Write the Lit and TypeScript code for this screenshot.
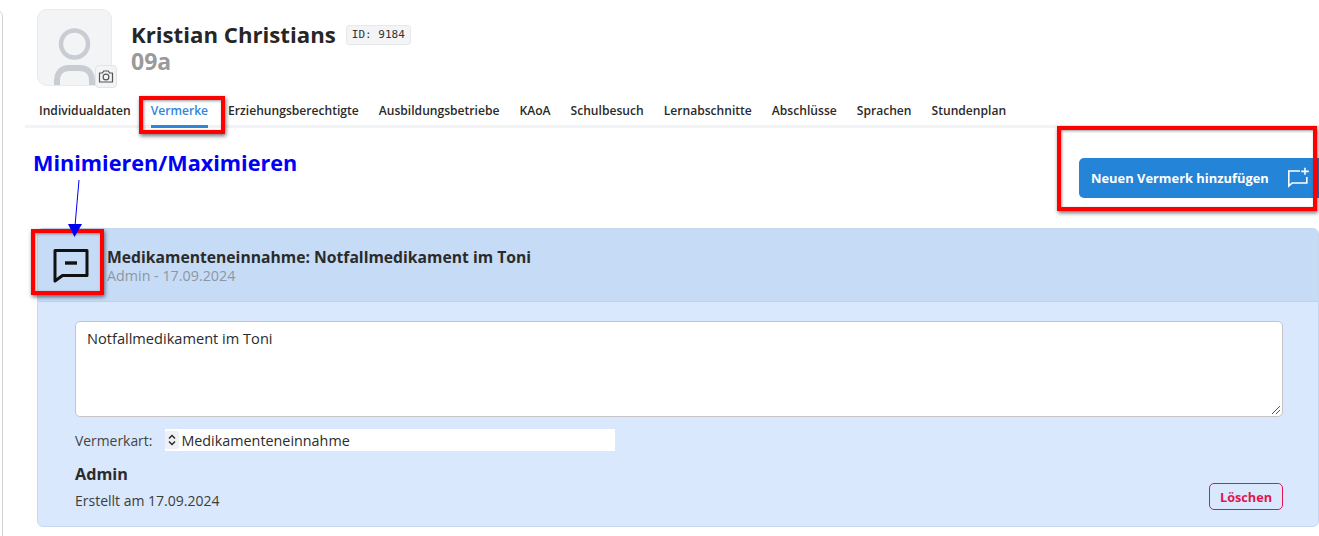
import { LitElement, html, css } from "lit";
import { customElement } from "lit/decorators.js";

const TABS = [
  "Individualdaten",
  "Vermerke",
  "Erziehungsberechtigte",
  "Ausbildungsbetriebe",
  "KAoA",
  "Schulbesuch",
  "Lernabschnitte",
  "Abschlüsse",
  "Sprachen",
  "Stundenplan",
];

@customElement("app-root")
export class AppRoot extends LitElement {
  static styles = css`
    :host {
      display: block;
      position: relative;
      width: 1319px;
      height: 536px;
      overflow: hidden;
      background: #fff;
      font-family: "Open Sans", "Noto Sans", sans-serif;
      color: #262626;
    }

    .rail {
      position: absolute;
      left: -10px;
      top: 10px;
      width: 11px;
      height: 540px;
      border: 1px solid #d4d4d4;
      border-radius: 6px;
    }

    .page {
      padding: 9px 0 0 25px;
    }

    .head {
      display: flex;
      gap: 19px;
      padding-left: 12px;
      height: 77px;
    }

    .avatar {
      position: relative;
      width: 75px;
      height: 77px;
      box-sizing: border-box;
      border: 1px solid #e8eaed;
      border-radius: 10px;
      background: #f3f4f6;
    }

    .avatar .person {
      display: block;
      width: 73px;
      height: 75px;
      border-radius: 10px;
    }

    .cam {
      position: absolute;
      right: -6px;
      bottom: -3px;
      width: 22px;
      height: 23px;
      box-sizing: border-box;
      display: flex;
      align-items: center;
      justify-content: center;
      background: #f3f4f6;
      border: 1px solid #e2e4e8;
      border-radius: 4px;
    }

    .who {
      padding-top: 12px;
    }

    .name-row {
      display: flex;
      align-items: center;
      gap: 10px;
      height: 28px;
    }

    .name {
      font-size: 22.2px;
      font-weight: 700;
      line-height: 28px;
      white-space: nowrap;
    }

    .id {
      font-family: "DejaVu Sans Mono", monospace;
      font-size: 11px;
      line-height: 18px;
      padding: 0 5px;
      color: #333;
      background: #f3f4f6;
      border: 1px solid #e6e8eb;
      border-radius: 3px;
    }

    .klasse {
      font-size: 23px;
      font-weight: 700;
      line-height: 25px;
      color: #9a9a9a;
    }

    .tabs {
      display: flex;
      gap: 20px;
      height: 42px;
      box-sizing: border-box;
      padding-left: 14px;
      border-bottom: 3px solid #f2f3f4;
    }

    .tab {
      font-size: 12.1px;
      font-weight: 600;
      line-height: 16px;
      padding-top: 17px;
      white-space: nowrap;
      color: #2a2a2a;
      box-sizing: border-box;
      height: 42px;
    }

    .tab.on {
      color: #2f86d8;
      border-bottom: 3px solid #2f86d8;
    }

    .actions {
      display: flex;
      justify-content: flex-end;
      height: 100px;
      box-sizing: border-box;
      padding-top: 30px;
    }

    .add {
      display: flex;
      align-items: center;
      justify-content: space-between;
      width: 240px;
      height: 40px;
      box-sizing: border-box;
      padding: 0 9px 0 12px;
      background: #2484d8;
      color: #fff;
      font-size: 12.9px;
      font-weight: 700;
      border-radius: 5px 0 0 5px;
    }

    .card {
      margin-left: 12px;
      height: 299px;
      box-sizing: border-box;
      background: #d9e8fd;
      border: 1px solid #c7d8ee;
      border-radius: 6px;
      overflow: hidden;
    }

    .card-head {
      display: flex;
      align-items: center;
      gap: 17px;
      height: 73px;
      box-sizing: border-box;
      padding-left: 14px;
      background: #c6dcf6;
      border-bottom: 1px solid #bdd3ee;
    }

    .card-head svg {
      flex: none;
    }

    .title {
      font-size: 15.7px;
      font-weight: 700;
      line-height: 20px;
      color: #2b2b2b;
      margin-top: 2px;
    }

    .sub {
      font-size: 14.3px;
      line-height: 18px;
      color: #8d97a3;
    }

    .card-body {
      padding: 19px 35px 0 37px;
    }

    .note {
      height: 96px;
      box-sizing: border-box;
      position: relative;
      padding: 6px 11px;
      background: #fff;
      border: 1px solid #c4c4c4;
      border-radius: 5px;
      font-size: 14.6px;
      line-height: 20px;
      color: #2b2b2b;
    }

    .grip {
      position: absolute;
      right: 1px;
      bottom: 1px;
    }

    .kind {
      display: flex;
      align-items: center;
      gap: 13px;
      height: 22px;
      margin-top: 12px;
      font-size: 13.9px;
      color: #444;
    }

    .select {
      display: flex;
      align-items: center;
      width: 450px;
      height: 22px;
      background: #fff;
      color: #2b2b2b;
      font-size: 14.35px;
    }

    .spin {
      display: flex;
      align-items: center;
      justify-content: center;
      width: 14px;
      height: 18px;
      margin-right: 2px;
      background: #eef0f3;
      border-radius: 3px;
    }

    .foot {
      display: flex;
      justify-content: space-between;
      align-items: flex-end;
    }

    .author {
      font-size: 16.2px;
      font-weight: 700;
      line-height: 20px;
      margin-top: 13px;
      color: #2b2b2b;
    }

    .created {
      font-size: 14px;
      line-height: 20px;
      margin-top: 7px;
      color: #3c3c3c;
    }

    .del {
      width: 74px;
      height: 27px;
      box-sizing: border-box;
      display: flex;
      align-items: center;
      justify-content: center;
      border: 1px solid #e0174f;
      border-radius: 5px;
      color: #e0174f;
      font-size: 12.7px;
      font-weight: 700;
      margin-bottom: 1px;
    }

    .mark {
      position: absolute;
      box-sizing: border-box;
      border: 4px solid #fe0000;
      box-shadow: 1px 2px 4px rgba(0, 0, 0, 0.55), inset 1px 1px 3px rgba(0, 0, 0, 0.4);
    }

    .m-tab {
      left: 139px;
      top: 96px;
      width: 86px;
      height: 38px;
    }

    .m-add {
      left: 1057px;
      top: 126px;
      width: 260px;
      height: 85px;
    }

    .m-toggle {
      left: 31px;
      top: 229px;
      width: 73px;
      height: 66px;
    }

    .label {
      position: absolute;
      left: 33px;
      top: 148px;
      font-size: 21.65px;
      font-weight: 700;
      line-height: 30px;
      color: #0000f5;
      white-space: nowrap;
    }

    .arrow {
      position: absolute;
      left: 60px;
      top: 178px;
    }
  `;

  render() {
    return html`
      <div class="rail"></div>
      <div class="page">
        <div class="head">
          <div class="avatar">
            <svg class="person" viewBox="0 0 73 75">
              <circle cx="36.5" cy="34" r="13.5" fill="none" stroke="#c9cdd3" stroke-width="4.5" />
              <path d="M19 75v-4c0-9 5-13 12-13h11c7 0 12 4 12 13v4" fill="none" stroke="#c9cdd3" stroke-width="6" />
            </svg>
            <div class="cam">
              <svg width="16" height="15" viewBox="0 0 16 15" fill="none" stroke="#555" stroke-width="1.2">
                <path d="M1.5 4h3l1.2-2h4.600l1.200 2h3v9h-13z" stroke-linejoin="round" />
                <circle cx="8" cy="8" r="2.9" />
              </svg>
            </div>
          </div>
          <div class="who">
            <div class="name-row">
              <span class="name">Kristian Christians</span>
              <span class="id">ID: 9184</span>
            </div>
            <div class="klasse">09a</div>
          </div>
        </div>

        <div class="tabs">
          ${TABS.map(
            (t) => html`<div class="tab ${t === "Vermerke" ? "on" : ""}">${t}</div>`
          )}
        </div>

        <div class="actions">
          <div class="add">
            <span>Neuen Vermerk hinzufügen</span>
            <svg width="24" height="22" viewBox="0 0 24 22" fill="none" stroke="#fff" stroke-width="1.6">
              <path d="M14 4H2.8v15l3.4-3h14.6V10" />
              <path d="M19 .8v7M15.2 4.4h7.6" />
            </svg>
          </div>
        </div>

        <div class="card">
          <div class="card-head">
            <svg width="38" height="38" viewBox="0 0 38 38" fill="none" stroke="#111" stroke-width="3">
              <path d="M3 4.5h32v25H10.500L3 35z" stroke-linejoin="round" />
              <path d="M13 17h12" stroke-width="3.4" />
            </svg>
            <div>
              <div class="title">Medikamenteneinnahme: Notfallmedikament im Toni</div>
              <div class="sub">Admin - 17.09.2024</div>
            </div>
          </div>
          <div class="card-body">
            <div class="note">
              Notfallmedikament im Toni
              <svg class="grip" width="10" height="10" viewBox="0 0 10 10" stroke="#555" stroke-width="1">
                <path d="M1 9l8-8M5 9l4-4" />
              </svg>
            </div>
            <div class="kind">
              <span>Vermerkart:</span>
              <div class="select">
                <span class="spin">
                  <svg width="8" height="12" viewBox="0 0 8 12" fill="none" stroke="#222" stroke-width="1.3">
                    <path d="M1 4.5l3-3 3 3M1 7.500l3 3 3-3" />
                  </svg>
                </span>
                Medikamenteneinnahme
              </div>
            </div>
            <div class="foot">
              <div>
                <div class="author">Admin</div>
                <div class="created">Erstellt am 17.09.2024</div>
              </div>
              <div class="del">Löschen</div>
            </div>
          </div>
        </div>
      </div>

      <div class="mark m-tab"></div>
      <div class="mark m-add"></div>
      <div class="mark m-toggle"></div>
      <div class="label">Minimieren/Maximieren</div>
      <svg class="arrow" width="30" height="60" viewBox="0 0 30 60">
        <path d="M19 2l-4 46" stroke="#0000f5" stroke-width="1" fill="none" />
        <path d="M8 46h14l-7.5 13z" fill="#0000f5" />
      </svg>
    `;
  }
}
